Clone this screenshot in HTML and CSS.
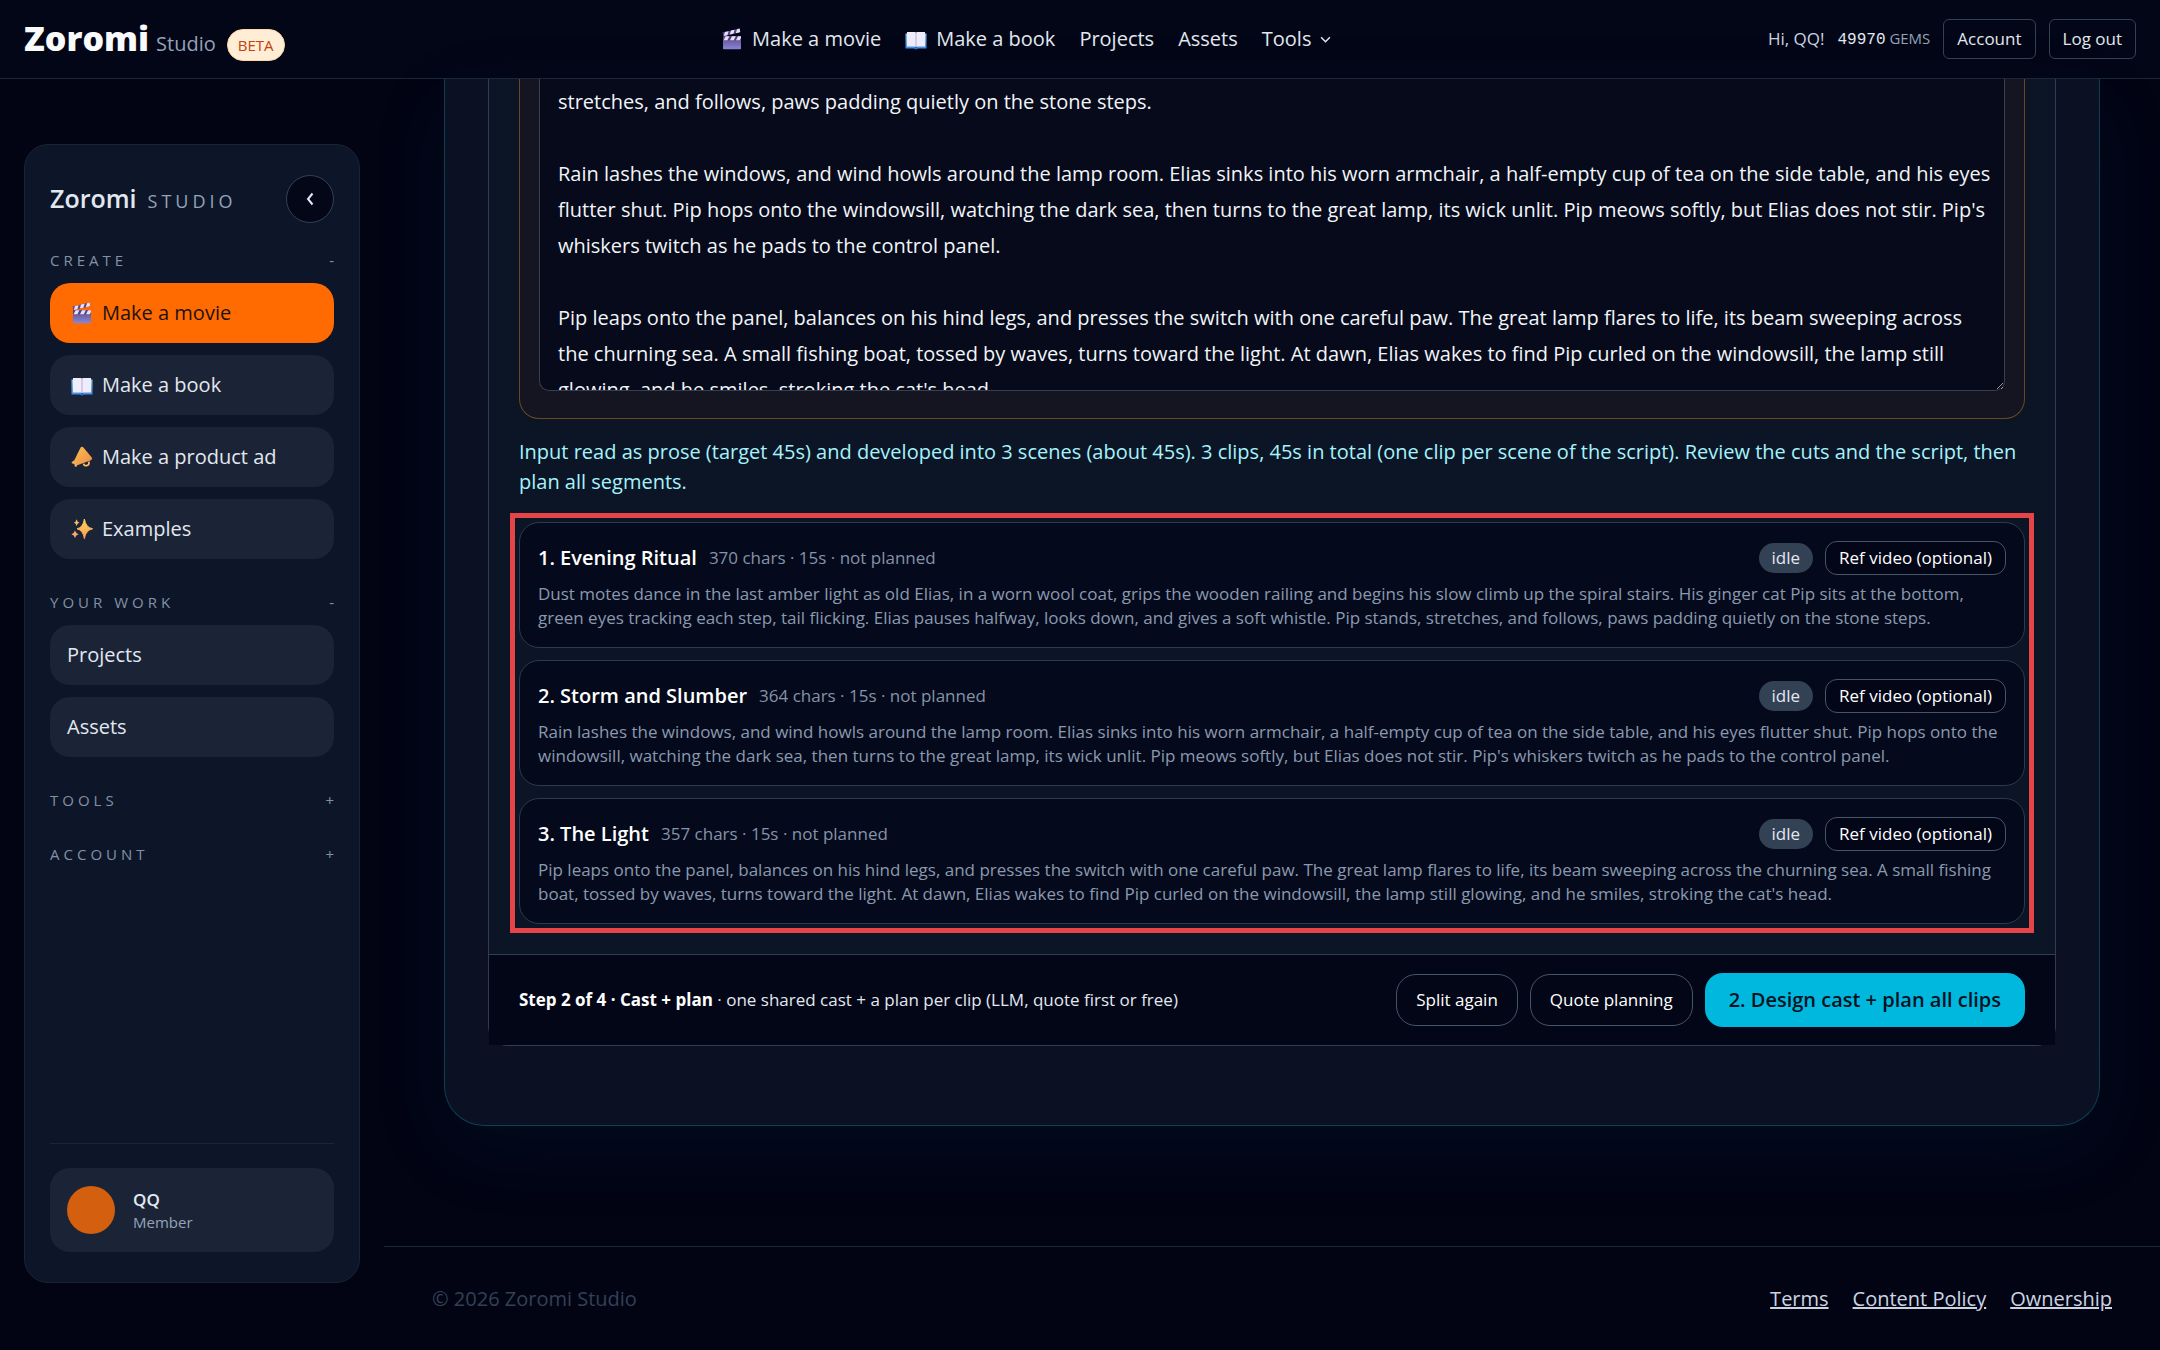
FILE: index.html
```html
<!DOCTYPE html>
<html lang="en">
<head>
    <meta charset="UTF-8">
    <title>Zoromi Studio</title>
    <link rel="stylesheet" href="styles.css">
</head>
<body>
    <!-- icons used more than once -->
    <svg class="sprite" aria-hidden="true">
        <defs>
            <linearGradient id="g-clap" x1="0" y1="0" x2="0" y2="1">
                <stop offset="0" stop-color="#5b4a86"/>
                <stop offset="1" stop-color="#8b86d8"/>
            </linearGradient>
            <linearGradient id="g-cover" x1="0" y1="0" x2="0" y2="1">
                <stop offset="0" stop-color="#8ec5f5"/>
                <stop offset="1" stop-color="#3a8be0"/>
            </linearGradient>
            <linearGradient id="g-horn" x1="0" y1="0" x2="1" y2="1">
                <stop offset="0" stop-color="#f6c04a"/>
                <stop offset="1" stop-color="#f08a4c"/>
            </linearGradient>
            <linearGradient id="g-star" x1="0" y1="0" x2="0" y2="1">
                <stop offset="0" stop-color="#ffd35c"/>
                <stop offset="1" stop-color="#f79a58"/>
            </linearGradient>
            <symbol id="clapper" viewBox="0 0 22 22">
                <path d="M1.5 4.6 18.6 0.6 19.4 4.2 2.4 8.2Z" fill="#5c4a80"/>
                <path d="M4 4 7.6 3.2 6.4 7.2 2.8 8ZM10 2.6 13.6 1.8 12.4 5.8 8.8 6.6ZM16 1.2 18.6 0.6 19.2 3.6 18.2 4.4 14.8 5.2Z" fill="#eadffa"/>
                <rect x="2" y="8.2" width="18" height="13" rx="1" fill="url(#g-clap)"/>
                <rect x="2" y="8.2" width="18" height="4" fill="#54417b"/>
                <path d="M4.6 8.2H8.4L6.4 12.2H2.6ZM11 8.2H14.8L12.8 12.2H9ZM17 8.2H20V10L18.8 12.2H15Z" fill="#eadffa"/>
            </symbol>
            <symbol id="book" viewBox="0 0 22 22">
                <path d="M0.5 5.5H21.5V20.5H13L11 21.5 9 20.5H0.5Z" fill="url(#g-cover)"/>
                <path d="M2 4H9.6Q11 4 11 5.4V18.4H2ZM20 4H12.4Q11 4 11 5.4V18.4H20Z" fill="#f1ecfb"/>
                <path d="M10.2 4.4H11.8V18.4H10.2Z" fill="#cfc6e6"/>
                <path d="M9.8 19H12.2L11 21.5Z" fill="#1c5fae"/>
            </symbol>
            <symbol id="horn" viewBox="0 0 22 22">
                <path d="M12.6 17.6Q13 20.4 16.2 19.4 18.8 18.4 17.6 15.6" fill="none" stroke="#f4bd6a" stroke-width="1.8"/>
                <path d="M9.6 1.6Q11 0.2 12.4 1.4L20.8 11.6Q21.6 13.4 20 14.2L5.6 19.4Q3 17.6 3.2 14.4Z" fill="url(#g-horn)"/>
                <path d="M3.2 14.2 0.6 16.2Q0.4 17 1.4 17.4L3.4 18 3.8 20.8 6 20.6 5.8 19Z" fill="#f5b061"/>
            </symbol>
            <symbol id="sparkles" viewBox="0 0 22 22">
                <path d="M13.4 1Q14.6 9.4 21.6 10.8 14.6 12.2 13.4 20.8 12.2 12.2 6 10.8 12.2 9.4 13.4 1Z" fill="url(#g-star)" stroke="url(#g-star)"/>
                <path d="M5.6 1.2Q6.2 4 8.6 4.6 6.2 5.2 5.6 8 5 5.2 2.8 4.6 5 4 5.6 1.2Z" fill="#f6bd5a"/>
                <path d="M4 12.6Q4.8 15.4 7.6 16.2 4.8 17 4 20 3.2 17 0.4 16.2 3.2 15.4 4 12.6Z" fill="#f5a66c"/>
            </symbol>
        </defs>
    </svg>

    <header class="topbar">
        <a class="logo" href="#"><strong>Zoromi</strong> <span>Studio</span> <em class="beta">BETA</em></a>
        <nav class="topnav">
            <a href="#"><svg class="icon"><use href="#clapper"/></svg>Make a movie</a>
            <a href="#"><svg class="icon"><use href="#book"/></svg>Make a book</a>
            <a href="#">Projects</a>
            <a href="#">Assets</a>
            <button type="button">Tools
                <svg class="chevron" viewBox="0 0 10 10"><path d="M1 3 5 7 9 3" fill="none" stroke="currentColor" stroke-width="1.4"/></svg>
            </button>
        </nav>
        <div class="user">
            <span class="hello">Hi, QQ!</span>
            <span class="gems"><b>49970</b> GEMS</span>
            <a class="btn-top" href="#">Account</a>
            <button class="btn-top" type="button">Log out</button>
        </div>
    </header>

    <div class="layout">
        <aside class="sidebar">
            <div class="side-head">
                <div class="side-brand"><strong>Zoromi</strong><span>STUDIO</span></div>
                <button class="collapse" type="button" aria-label="Collapse">
                    <svg viewBox="0 0 16 16"><path d="M10.5 2.5 6 8 10.5 13.5" fill="none" stroke="currentColor" stroke-width="2"/></svg>
                </button>
            </div>

            <div class="group">
                <button class="group-label" type="button">CREATE<i>-</i></button>
                <a class="item active" href="#"><svg class="icon"><use href="#clapper"/></svg>Make a movie</a>
                <a class="item" href="#"><svg class="icon"><use href="#book"/></svg>Make a book</a>
                <a class="item" href="#"><svg class="icon"><use href="#horn"/></svg>Make a product ad</a>
                <a class="item" href="#"><svg class="icon"><use href="#sparkles"/></svg>Examples</a>
            </div>
            <div class="group">
                <button class="group-label" type="button">YOUR WORK<i>-</i></button>
                <a class="item" href="#">Projects</a>
                <a class="item" href="#">Assets</a>
            </div>
            <div class="group">
                <button class="group-label" type="button">TOOLS<i>+</i></button>
            </div>
            <div class="group">
                <button class="group-label" type="button">ACCOUNT<i>+</i></button>
            </div>

            <div class="side-foot">
                <div class="member">
                    <span class="avatar"></span>
                    <div>
                        <div class="member-name">QQ</div>
                        <div class="member-role">Member</div>
                    </div>
                </div>
            </div>
        </aside>

        <div class="content">
            <main class="panel">
                <section class="wizard">
                    <div class="wizard-body">
                        <div class="script-box">
                            <textarea class="script" aria-label="Script">stretches, and follows, paws padding quietly on the stone steps.

Rain lashes the windows, and wind howls around the lamp room. Elias sinks into his worn armchair, a half-empty cup of tea on the side table, and his eyes flutter shut. Pip hops onto the windowsill, watching the dark sea, then turns to the great lamp, its wick unlit. Pip meows softly, but Elias does not stir. Pip's whiskers twitch as he pads to the control panel.

Pip leaps onto the panel, balances on his hind legs, and presses the switch with one careful paw. The great lamp flares to life, its beam sweeping across the churning sea. A small fishing boat, tossed by waves, turns toward the light. At dawn, Elias wakes to find Pip curled on the windowsill, the lamp still glowing, and he smiles, stroking the cat's head.</textarea>
                        </div>
                        <p class="status">Input read as prose (target 45s) and developed into 3 scenes (about 45s). 3 clips, 45s in total (one clip per scene of the script). Review the cuts and the script, then plan all segments.</p>

                        <div class="clips">
                            <article class="clip">
                                <div class="clip-head">
                                    <h3>1. Evening Ritual</h3>
                                    <span class="meta">370 chars · 15s · not planned</span>
                                    <span class="state">idle</span>
                                    <button class="ref" type="button">Ref video (optional)</button>
                                </div>
                                <p>Dust motes dance in the last amber light as old Elias, in a worn wool coat, grips the wooden railing and begins his slow climb up the spiral stairs. His ginger cat Pip sits at the bottom, green eyes tracking each step, tail flicking. Elias pauses halfway, looks down, and gives a soft whistle. Pip stands, stretches, and follows, paws padding quietly on the stone steps.</p>
                            </article>
                            <article class="clip">
                                <div class="clip-head">
                                    <h3>2. Storm and Slumber</h3>
                                    <span class="meta">364 chars · 15s · not planned</span>
                                    <span class="state">idle</span>
                                    <button class="ref" type="button">Ref video (optional)</button>
                                </div>
                                <p>Rain lashes the windows, and wind howls around the lamp room. Elias sinks into his worn armchair, a half-empty cup of tea on the side table, and his eyes flutter shut. Pip hops onto the windowsill, watching the dark sea, then turns to the great lamp, its wick unlit. Pip meows softly, but Elias does not stir. Pip's whiskers twitch as he pads to the control panel.</p>
                            </article>
                            <article class="clip">
                                <div class="clip-head">
                                    <h3>3. The Light</h3>
                                    <span class="meta">357 chars · 15s · not planned</span>
                                    <span class="state">idle</span>
                                    <button class="ref" type="button">Ref video (optional)</button>
                                </div>
                                <p>Pip leaps onto the panel, balances on his hind legs, and presses the switch with one careful paw. The great lamp flares to life, its beam sweeping across the churning sea. A small fishing boat, tossed by waves, turns toward the light. At dawn, Elias wakes to find Pip curled on the windowsill, the lamp still glowing, and he smiles, stroking the cat's head.</p>
                            </article>
                        </div>
                    </div>

                    <div class="actions">
                        <p><strong>Step 2 of 4 · Cast + plan</strong> · one shared cast + a plan per clip (LLM, quote first or free)</p>
                        <button class="btn" type="button">Split again</button>
                        <button class="btn" type="button">Quote planning</button>
                        <button class="btn-primary" type="button">2. Design cast + plan all clips</button>
                    </div>
                </section>
            </main>

            <footer class="footer">
                <span>© 2026 Zoromi Studio</span>
                <nav>
                    <a href="#">Terms</a>
                    <a href="#">Content Policy</a>
                    <a href="#">Ownership</a>
                </nav>
            </footer>
        </div>
    </div>
</body>
</html>
```

FILE: styles.css
```css
*{
    box-sizing: border-box;
    margin: 0;
    padding: 0;
}
body{
    min-height: 100vh;
    display: flex;
    flex-direction: column;
    background: #020414;
    color: #e2e8f0;
    font-family: "Open Sans", "Noto Sans", sans-serif;
    font-size: 20px;
    line-height: 30px;
}
a{
    color: inherit;
    text-decoration: none;
}
button, textarea{
    font: inherit;
    color: inherit;
    background: none;
    border: 0;
}
button{
    cursor: pointer;
}
.sprite{
    position: absolute;
    width: 0;
    height: 0;
}
.icon{
    width: 22px;
    height: 22px;
    flex: none;
}

/* top bar */
.topbar{
    height: 79px;
    padding: 0 24px;
    display: flex;
    align-items: center;
    justify-content: space-between;
    border-bottom: 1px solid #1c2739;
    background: #030616;
}
.logo{
    padding-top: 6px;
    display: flex;
    align-items: baseline;
    gap: 7px;
    color: #94a3b8;
}
.logo strong{
    font-size: 34px;
    font-weight: 800;
    color: #f8fafc;
}
.beta{
    margin-left: 4px;
    padding: 0 10px;
    border: 1px solid #fed7aa;
    border-radius: 16px;
    background: #ffedd5;
    color: #c2410c;
    font-size: 15px;
    font-style: normal;
    font-weight: 500;
}
.topnav{
    display: flex;
    align-items: center;
    gap: 24px;
}
.topnav a, .topnav button{
    display: flex;
    align-items: center;
    gap: 9px;
}
.chevron{
    width: 11px;
    height: 11px;
}
.user{
    display: flex;
    align-items: center;
    gap: 13px;
    font-size: 17px;
    color: #cbd5e1;
}
.gems{
    font-size: 15px;
    color: #94a3b8;
}
.gems b{
    font-family: "Liberation Mono", monospace;
    font-size: 16px;
    font-weight: 400;
    color: #e2e8f0;
}
.btn-top{
    padding: 4px 13px;
    border: 1px solid #334155;
    border-radius: 6px;
    font-size: 17px;
    color: #e2e8f0;
}

/* sidebar */
.layout{
    flex: 1;
    display: grid;
    grid-template-columns: 384px minmax(0, 1fr);
}
.sidebar{
    margin: 65px 24px 67px;
    padding: 30px 25px;
    display: flex;
    flex-direction: column;
    gap: 33px;
    border: 1px solid #182436;
    border-radius: 24px;
    background: #0d1628;
}
.side-head{
    display: flex;
    align-items: center;
    justify-content: space-between;
    margin-bottom: -6px;
}
.side-brand{
    display: flex;
    align-items: baseline;
    gap: 11px;
    color: #94a3b8;
    font-size: 18px;
}
.side-brand span{
    letter-spacing: 4px;
}
.side-brand strong{
    font-size: 25px;
    font-weight: 600;
    color: #e2e8f0;
}
.collapse{
    width: 48px;
    height: 48px;
    display: grid;
    place-items: center;
    border: 1px solid #334155;
    border-radius: 50%;
    background: #030718;
}
.collapse svg{
    width: 16px;
    height: 16px;
}
.group{
    display: flex;
    flex-direction: column;
    gap: 12px;
}
.group-label{
    margin-bottom: 1px;
    display: flex;
    justify-content: space-between;
    font-size: 15px;
    line-height: 20px;
    letter-spacing: 4px;
    color: #8391a6;
}
.group-label i{
    font-style: normal;
    letter-spacing: 0;
}
.item{
    height: 60px;
    padding: 0 17px;
    display: flex;
    align-items: center;
    border-radius: 20px;
    background: #1b2436;
    font-weight: 500;
}
.item .icon{
    margin: 0 9px 0 4px;
}
.item.active{
    background: #ff6b00;
    color: #1c1210;
}
.side-foot{
    margin-top: auto;
    padding-top: 24px;
    border-top: 1px solid #1b2739;
}
.member{
    height: 84px;
    padding: 0 17px;
    display: flex;
    align-items: center;
    gap: 18px;
    border-radius: 20px;
    background: #1b2436;
}
.avatar{
    width: 48px;
    height: 48px;
    border-radius: 50%;
    background: #d45f0e;
}
.member-name{
    font-size: 17px;
    font-weight: 600;
    line-height: 24px;
}
.member-role{
    font-size: 15px;
    line-height: 20px;
    color: #94a3b8;
}

/* main panel, its top runs under the bar */
.content{
    display: flex;
    flex-direction: column;
}
.panel{
    margin: 0 60px;
    padding: 0 43px 79px;
    border: 1px solid #0b4056;
    border-top: 0;
    border-radius: 0 0 40px 40px;
    background: #0b1023;
    box-shadow: 0 24px 72px rgba(8, 60, 90, 0.14);
}
.wizard{
    border: 1px solid #303c4f;
    border-top: 0;
    border-radius: 0 0 20px 20px;
    background: #0c1526;
}
.wizard-body{
    padding: 0 30px 30px;
}
.script-box{
    padding: 0 19px 27px;
    border: 1px solid #694820;
    border-top: 0;
    border-radius: 0 0 20px 20px;
    background: #141521;
}
.script{
    display: block;
    width: 100%;
    height: 312px;
    padding: 5px 12px 0 18px;
    border: 1px solid #334155;
    border-top: 0;
    border-radius: 0 0 10px 10px;
    background: #060a1a;
    color: #f1f5f9;
    color-scheme: dark;
    line-height: 36px;
    overflow: hidden;
    resize: vertical;
}
.status{
    margin: 18px 0 25px;
    color: #a5f3fc;
}
.clips{
    display: flex;
    flex-direction: column;
    gap: 12px;
    outline: 5px solid #e64547;
    outline-offset: 4px;
}
.clip{
    padding: 18px 18px 17px;
    border: 1px solid #2c3a4e;
    border-radius: 20px;
    background: #040a1b;
}
.clip-head{
    display: flex;
    align-items: center;
    gap: 12px;
    margin-bottom: 7px;
}
.clip h3{
    font-size: 20px;
    font-weight: 600;
    color: #fff;
}
.meta{
    flex: 1;
    font-size: 17px;
    color: #8593a8;
}
.state{
    padding: 0 13px;
    border-radius: 16px;
    background: #334155;
    font-size: 17px;
}
.ref{
    padding: 1px 13px;
    border: 1px solid #475569;
    border-radius: 12px;
    background: #020617;
    color: #fff;
    font-size: 17px;
    font-weight: 500;
}
.clip p{
    font-size: 17px;
    line-height: 24px;
    color: #8b99af;
}
.actions{
    padding: 18px 30px;
    display: flex;
    align-items: center;
    gap: 12px;
    border-top: 1px solid #303c4f;
    background: #030616;
    font-size: 17px;
}
.actions p{
    flex: 1;
}
.actions strong{
    font-weight: 700;
    color: #fff;
}
.btn{
    padding: 10px 19px;
    border: 1px solid #475569;
    border-radius: 20px;
    color: #fff;
    font-weight: 500;
}
.btn-primary{
    padding: 12px 24px;
    border-radius: 18px;
    background: #00b8de;
    color: #04121f;
    font-size: 20px;
    font-weight: 600;
}

/* footer */
.footer{
    margin-top: auto;
    padding: 37px 48px 36px;
    display: flex;
    justify-content: space-between;
    border-top: 1px solid #1b2637;
    color: #334155;
}
.footer nav{
    display: flex;
    gap: 24px;
    color: #cbd5e1;
}
.footer a{
    text-decoration: underline;
}
```
